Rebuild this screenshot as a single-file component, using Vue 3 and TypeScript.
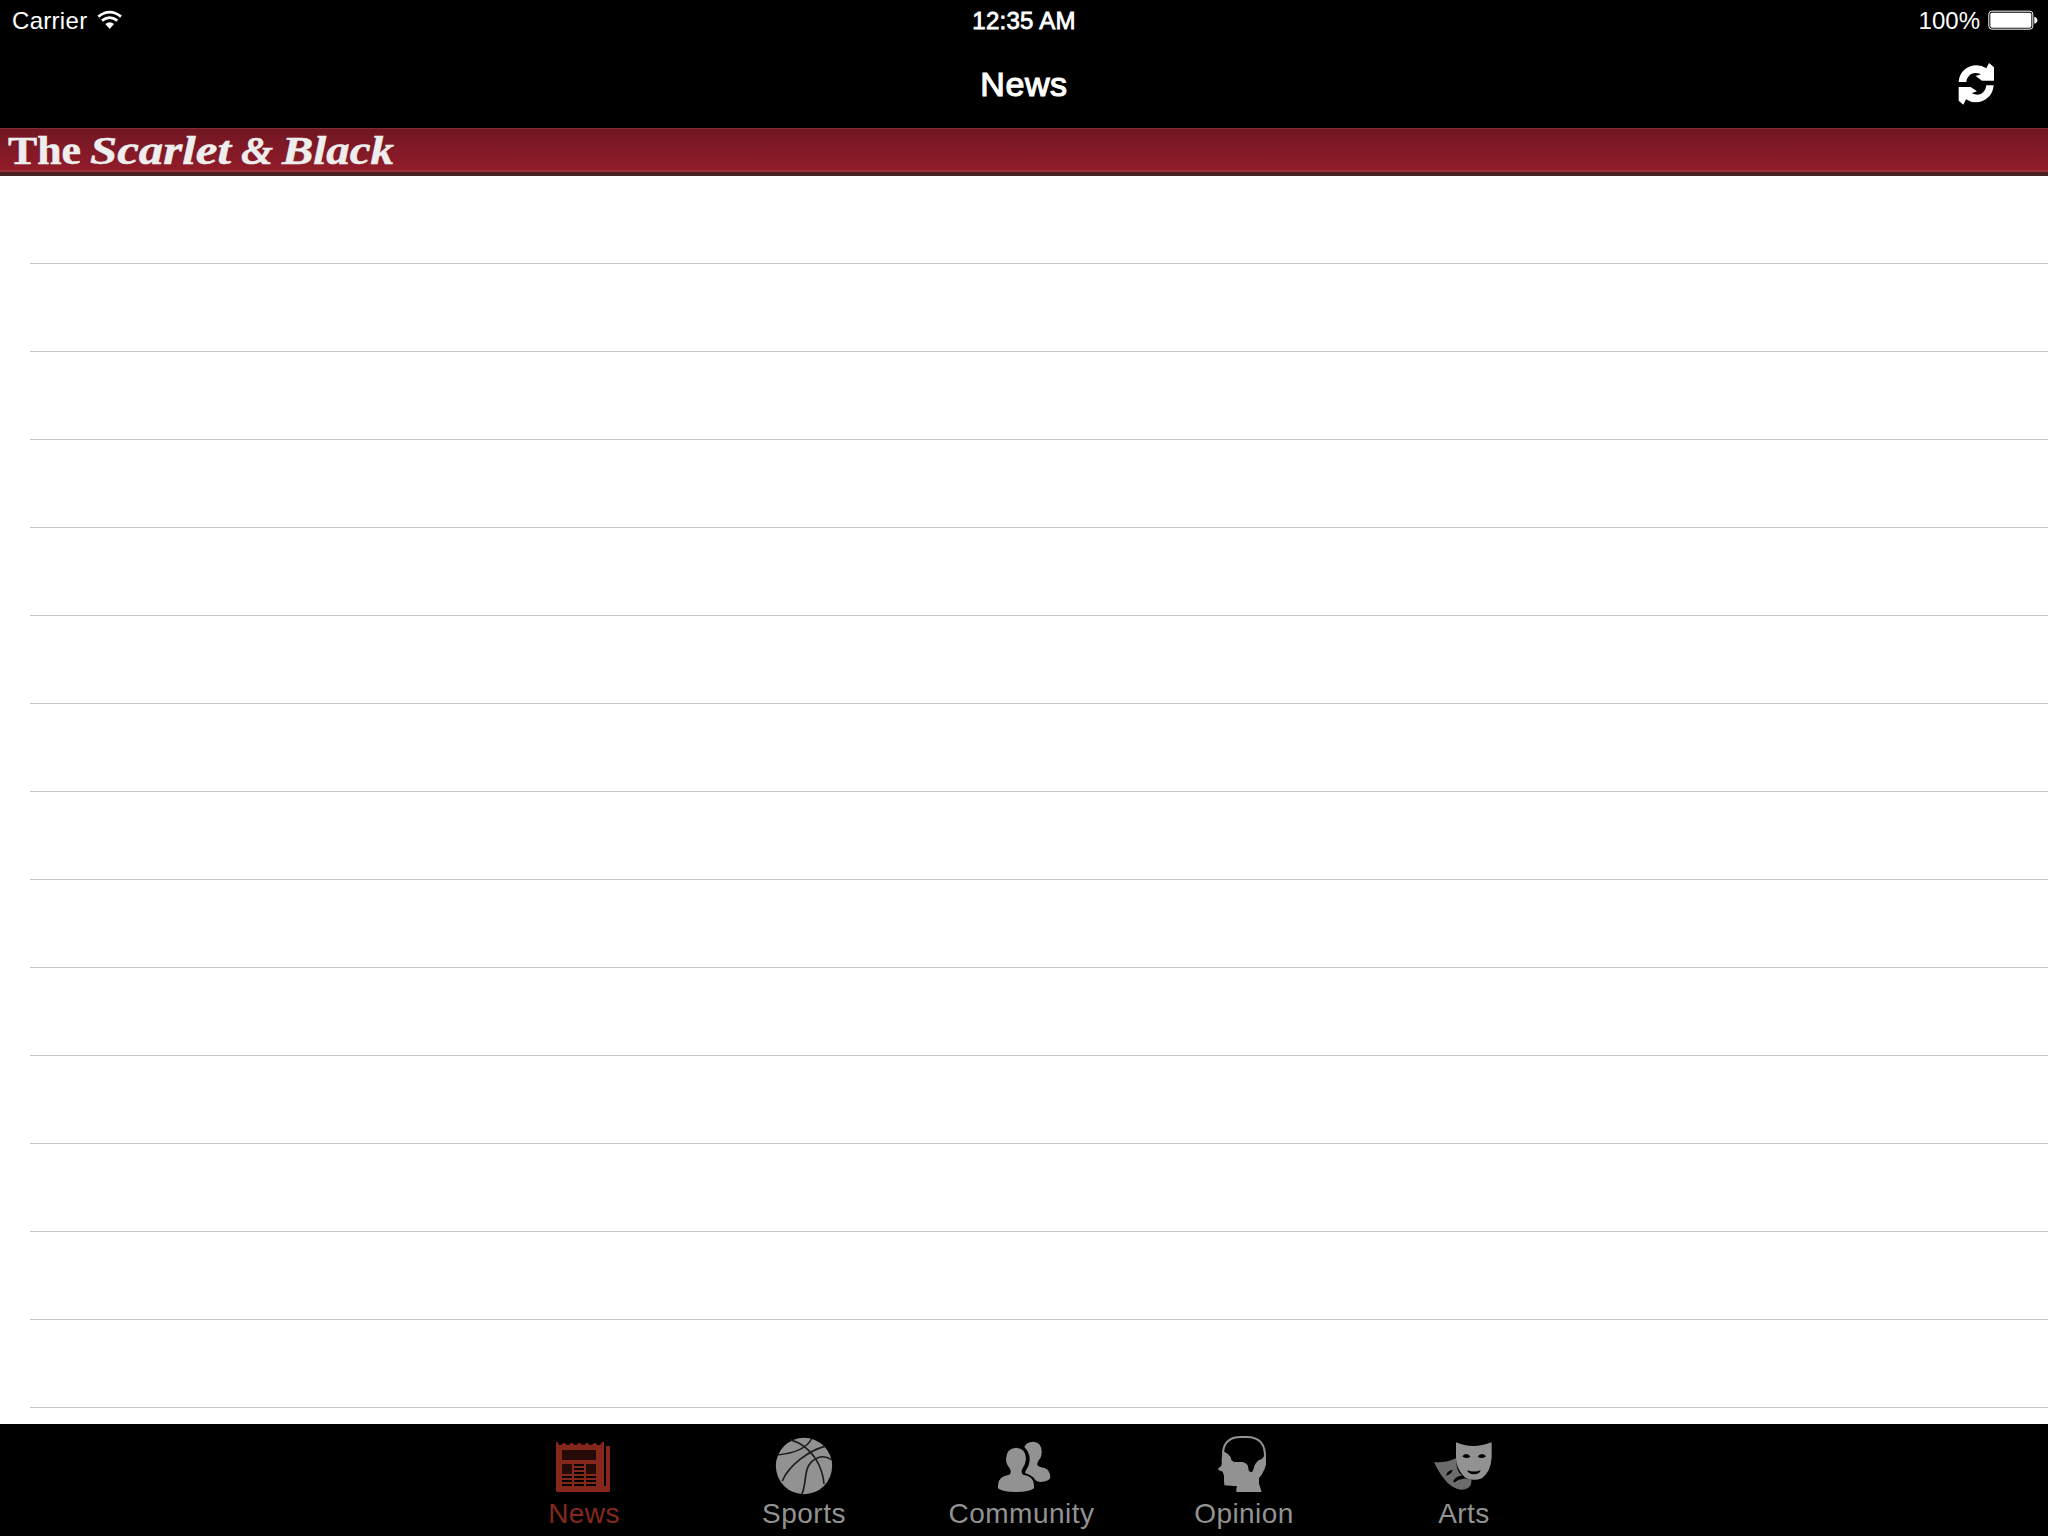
<script setup lang="ts">
interface Tab { id: string; label: string; box: string; spacing: number; shift: number }

const rows: number[] = Array.from({ length: 14 }, (_, i) => i)
const tabs: Tab[] = [
  { id: 'news', label: 'News', box: '72 60 180 180', spacing: 0.4, shift: 0 },
  { id: 'sports', label: 'Sports', box: '72 60 180 180', spacing: 0.5, shift: 0 },
  { id: 'community', label: 'Community', box: '192 60 180 180', spacing: 0.5, shift: -2.5 },
  { id: 'opinion', label: 'Opinion', box: '102 60 180 180', spacing: 0.4, shift: 0 },
  { id: 'arts', label: 'Arts', box: '102 60 180 180', spacing: 0.4, shift: 0 },
]
const active = 'news'
</script>

<template>
  <div class="screen">
    <header class="top">
      <div class="status">
        <div class="side left">
          <span class="carrier">Carrier</span>
          <svg class="wifi" width="26" height="20" viewBox="294 30 78 60">
            <g fill="none" stroke="#fff" stroke-width="8">
              <path d="M298 50Q332 23 366 50" />
              <path d="M309 62Q332 44 355 62" />
            </g>
            <path d="M319 72Q332 62 345 72L332 87Z" fill="#fff" />
          </svg>
        </div>
        <span class="clock">12:35 AM</span>
        <div class="side right">
          <span class="percent">100%</span>
          <svg class="battery" width="50" height="20" viewBox="263 31 150 60">
            <rect x="265.5" y="34.5" width="132" height="54" rx="9" fill="none" stroke="#fff" stroke-width="3" />
            <rect x="270" y="39" width="123" height="45" rx="5" fill="#fff" />
            <path d="M402 51Q411 54 411 61.500Q411 69 402 72Z" fill="#fff" />
          </svg>
        </div>
      </div>
      <div class="nav">
        <h1>News</h1>
        <button class="refresh" aria-label="Refresh">
          <svg width="40" height="46" viewBox="171 184 120 138" fill="#fff">
            <path d="M176 247C178 216 202 197 230 197Q246 197 259 206L267 190L282 203V243H246L227 229L243 224Q219 214 206 230Q199 237 199 247Z" />
            <path d="M281 257C279 288 255 308 228 308Q211 308 198 299L190 315L176 303V262H212L231 275L215 281Q239 291 251 276Q258 268 259 257Z" />
          </svg>
        </button>
      </div>
    </header>

    <div class="masthead">
      <svg width="420" height="42" viewBox="0 129 420 42">
        <g class="logo">
          <text x="8" y="163.500" textLength="73" lengthAdjust="spacingAndGlyphs">The</text>
          <g font-style="italic">
            <text x="90" y="163.500" textLength="141" lengthAdjust="spacingAndGlyphs">Scarlet</text>
            <text x="241" y="163.500" textLength="32" lengthAdjust="spacingAndGlyphs">&amp;</text>
            <text x="282" y="163.500" textLength="112" lengthAdjust="spacingAndGlyphs">Black</text>
          </g>
        </g>
      </svg>
    </div>

    <main class="list">
      <div v-for="row in rows" :key="row" class="row" />
    </main>

    <nav class="tabs">
      <div v-for="tab in tabs" :key="tab.id" class="tab" :class="{ active: tab.id === active }">
        <svg width="60" height="60" :viewBox="tab.box" fill="currentColor">
          <template v-if="tab.id === 'news'">
            <path d="M78 78H83L87 87H94L98 82H106L110 87H117L121 82H129L133 87H140L144 82H152L156 87H163L167 82H175L179 87H186L190 82H198L202 87H210L217 78H222V210H228V90H240V225L237 228H81L78 225Z" />
            <path d="M96 102H198V132H96ZM96 144H126V174H96ZM168 144H198V174H168Z" fill="#250a07" />
            <path d="M132 144H162V150H132ZM132 156H162V162H132ZM132 168H162V174H132ZM96 180H126V186H96ZM132 180H162V186H132ZM168 180H198V186H168ZM96 192H126V198H96ZM132 192H162V198H132ZM168 192H198V198H168ZM96 204H126V210H96ZM132 204H162V210H132ZM168 204H198V210H168Z" fill="#000" />
          </template>
          <template v-else-if="tab.id === 'sports'">
            <circle cx="162" cy="150" r="84.500" />
            <g fill="none" stroke="#1c1c1c" stroke-width="5">
              <path d="M121 71Q170 86 198 130Q219 165 222 204" />
              <path d="M81 117Q164 109 184 69" />
              <path d="M97 195C116 149 174 105 224 91" />
              <path d="M156 234C171 198 160 161 185 137Q215 111 244 131" />
            </g>
          </template>
          <template v-else-if="tab.id === 'community'">
            <path d="M283 93Q288 78 309 77Q335 78 335 108Q335 125 326 133Q321 141 322 147Q326 153 344 156Q361 163 361 184Q359 197 331 198Q319 197 315 191Q310 180 285 171Q288 161 295 151Q307 116 283 93Z" />
            <path d="M258 95Q288 97 288 129Q287 145 277 158Q272 170 279 176Q312 181 312 207V217Q300 228 258 228Q215 228 204 217V207Q204 181 238 176Q245 170 240 158Q228 145 228 129Q229 97 258 95Z" />
          </template>
          <template v-else-if="tab.id === 'opinion'">
            <path d="M129 113C130 81 148 63 183 63H200C237 63 257 83 255 127" fill="none" stroke="currentColor" stroke-width="6" />
            <path d="M127 107L133 107L144 114L152 123L154 132L162 138H188Q198 140 203 148L207 166L216 169L221 158Q224 141 237 132Q248 130 252 120H258V146Q255 159 245 176L237 186V203L245 228H169V220L171 211L133 208L132 194V179L128 167L115 162V157L123 151Q126 144 125 132Z" />
          </template>
          <template v-else>
            <path class="sad" d="M102 138Q137 142 170 126Q165 163 188 181Q199 191 214 191Q216 207 204 216Q177 231 144 202Q119 176 102 138Z" />
            <path d="M138 179Q141 164 158 161Q155 174 138 179ZM160 194Q173 174 197 181L201 187L190 188Q174 190 162 200Z" fill="#000" />
            <path d="M168 79Q218 101 275 79V124Q273 166 246 187Q221 197 196 185Q168 161 168 124Z" />
            <path d="M187 121Q192 114 200 114Q208 116 211 122Q207 126 199 126Q191 126 187 121ZM233 122Q237 114 247 114Q254 115 258 121Q253 126 246 126Q238 126 233 122ZM202 163Q222 170 242 163Q240 174 222 175Q204 174 202 163Z" fill="#000" />
          </template>
        </svg>
        <span class="label" :style="{ letterSpacing: tab.spacing + 'px', marginLeft: tab.shift * 2 + 'px' }">{{ tab.label }}</span>
      </div>
    </nav>
  </div>
</template>

<style>
body { margin: 0; background: #000; }
</style>

<style scoped>
.screen {
  width: 2048px;
  height: 1536px;
  display: flex;
  flex-direction: column;
  overflow: hidden;
  background: #fff;
  font-family: "Liberation Sans", Arial, sans-serif;
}
.top { height: 128px; background: #000; color: #fff; }
.status {
  height: 40px;
  display: grid;
  grid-template-columns: 1fr auto 1fr;
  align-items: center;
  font-size: 24px;
  line-height: 38px;
}
.status span { padding-top: 2px; }
.status svg { display: block; }
.side { display: flex; align-items: center; }
.left { padding-left: 12px; gap: 10px; }
.right { justify-content: flex-end; padding-right: 10px; gap: 8px; }
.carrier { letter-spacing: 0.3px; }
.clock { letter-spacing: 0.25px; -webkit-text-stroke: 0.8px #fff; }
.nav {
  height: 88px;
  display: grid;
  grid-template-columns: 1fr auto 1fr;
  align-items: center;
}
h1 {
  grid-column: 2;
  margin: 0;
  font-size: 34px;
  font-weight: 400;
  line-height: 88px;
  letter-spacing: 0.6px;
  -webkit-text-stroke: 1.2px #fff;
}
.refresh {
  justify-self: end;
  margin: 0 51px 0 0;
  padding: 0;
  border: 0;
  background: none;
}
.refresh svg { display: block; }
.masthead {
  box-sizing: border-box;
  height: 48px;
  border-top: 1px solid #7f2c35;
  border-bottom: 4px solid #4a2022;
  background: linear-gradient(#701722, #921c2a 41px, #9b3039 41px);
}
.masthead svg { display: block; overflow: visible; }
.logo {
  font-family: "Liberation Serif", "Times New Roman", serif;
  font-size: 41px;
  font-weight: 700;
  fill: #eee;
  stroke: #eee;
  stroke-width: 0.5px;
}
.list { flex: 1; min-height: 0; overflow: hidden; }
.row {
  box-sizing: border-box;
  height: 88px;
  margin-left: 30px;
  border-bottom: 1px solid #c8c7cc;
}
.tabs {
  height: 112px;
  display: flex;
  justify-content: center;
  background: #000;
  color: #929292;
}
.tab {
  width: 220px;
  padding-top: 12px;
  display: flex;
  flex-direction: column;
  align-items: center;
}
.tab svg { display: block; flex: none; }
.tab.active { color: #86271c; }
.label { font-size: 28px; line-height: 32px; margin-top: 2px; }
.sad { fill: #6c6c6c; }
</style>
